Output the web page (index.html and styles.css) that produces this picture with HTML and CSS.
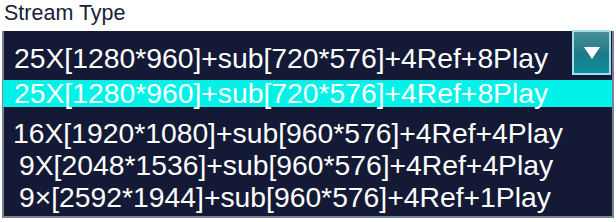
FILE: index.html
```html
<!DOCTYPE html>
<html lang="en">
<head>
    <meta charset="UTF-8" />
    <meta name="viewport" content="width=device-width, initial-scale=1.0"/>
    <title>Stream Type</title>

    <link rel="stylesheet" href="styles.css">
</head>
<body>
    <div class="field">
        <div class="label">Stream Type</div>

        <div class="dropdown">
            <div class="selected">
                <span class="value">25X[1280*960]+sub[720*576]+4Ref+8Play</span>
                <div class="arrowBtn">
                    <svg width="18" height="14" viewBox="0 0 18 14">
                        <polygon points="1,1 17,1 9,13" fill="#fff"/>
                    </svg>
                </div>
            </div>

            <ul class="options">
                <li class="option active">25X[1280*960]+sub[720*576]+4Ref+8Play</li>
                <li class="option first">16X[1920*1080]+sub[960*576]+4Ref+4Play</li>
                <li class="option indent">9X[2048*1536]+sub[960*576]+4Ref+4Play</li>
                <li class="option indent">9×[2592*1944]+sub[960*576]+4Ref+1Play</li>
            </ul>
        </div>
    </div>
</body>
</html>
```

FILE: styles.css
```css
body {
    margin: 0;
    background: #fff;
    font-family: "Liberation Sans", Arial, sans-serif;
}

.field {
    width: 616px;
}

.label {
    height: 31px;
    padding-left: 4px;
    font-size: 21.5px;
    line-height: 26px;
    color: #1b2038;
}

.dropdown {
    margin-left: 2px;
    width: 608px;
    background: #141a35;
    border: 2px solid #7b8294;
    border-top: none;
    color: #fff;
    font-size: 28.3px;
}

.selected {
    display: flex;
    justify-content: space-between;
    align-items: flex-start;
    height: 49px;
}

.value {
    padding: 11px 0 0 10px;
    line-height: 32px;
}

.arrowBtn {
    width: 35px;
    height: 41px;
    margin: -1px 1px 0 0;
    border: 2px solid #a3dfe8;
    background: linear-gradient(#4b8e9a, #1e7a88 55%, #0b8fa2);
    display: flex;
    justify-content: center;
    align-items: center;
}

.options {
    list-style: none;
    margin: 0;
    padding: 0 0 3px 0;
}

.option {
    padding-left: 10px;
    line-height: 32px;
    white-space: nowrap;
}

.option.active {
    margin-left: -1px;
    padding-left: 11px;
    background: #00f2e8;
    line-height: 27px;
    margin-bottom: 10px;
}

.option.first {
    padding-left: 9px;
}

.option.indent {
    padding-left: 15px;
}
```
